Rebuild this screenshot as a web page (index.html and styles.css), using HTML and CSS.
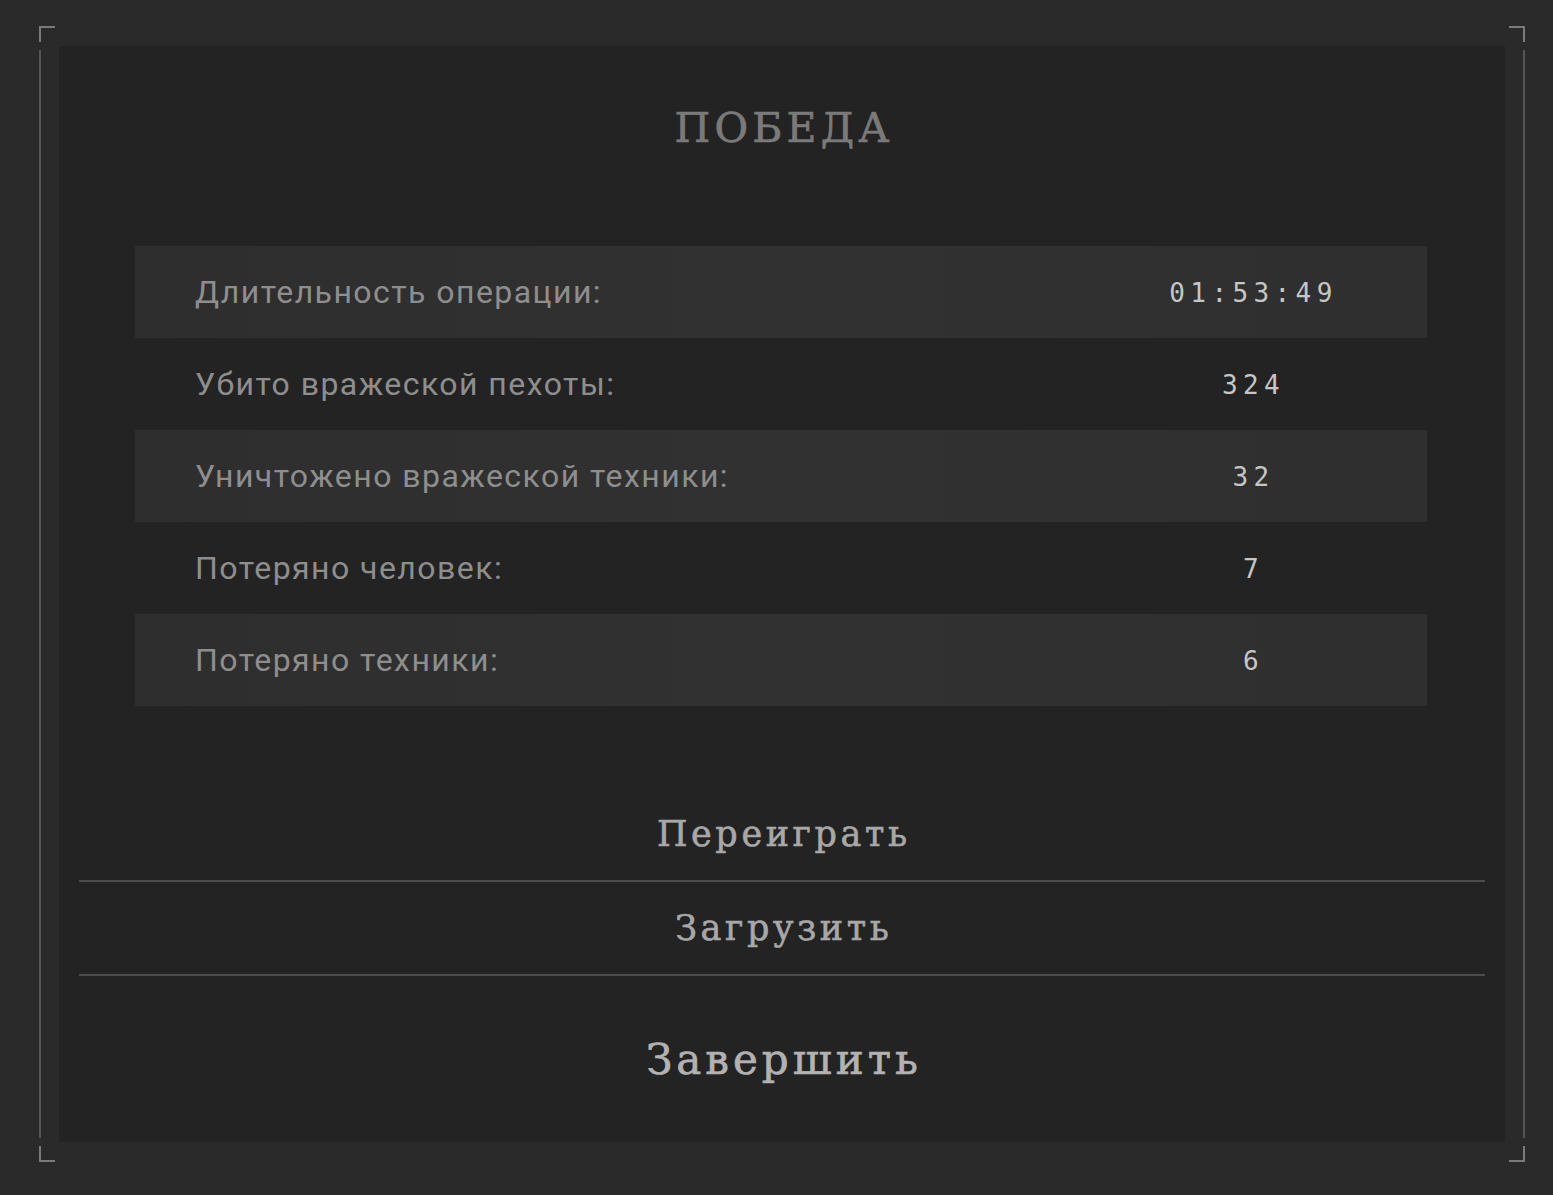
FILE: index.html
```html
<!DOCTYPE html>
<html lang="ru">
<head>
<meta charset="utf-8">
<title>Победа</title>
<link rel="stylesheet" href="styles.css">
</head>
<body>
<div class="screen">
  <div class="frame">
    <span class="corner corner-tl"></span>
    <span class="corner corner-tr"></span>
    <span class="corner corner-bl"></span>
    <span class="corner corner-br"></span>
    <span class="rail rail-left"></span>
    <span class="rail rail-right"></span>
    <main class="panel">
      <h1 class="title">ПОБЕДА</h1>
      <div class="stats">
        <div class="row row-shaded"><span class="label">Длительность операции:</span><span class="value">01:53:49</span></div>
        <div class="row"><span class="label">Убито вражеской пехоты:</span><span class="value">324</span></div>
        <div class="row row-shaded"><span class="label">Уничтожено вражеской техники:</span><span class="value">32</span></div>
        <div class="row"><span class="label">Потеряно человек:</span><span class="value">7</span></div>
        <div class="row row-shaded"><span class="label">Потеряно техники:</span><span class="value">6</span></div>
      </div>
      <nav class="menu">
        <button class="menu-item">Переиграть</button>
        <button class="menu-item">Загрузить</button>
        <button class="menu-item menu-item-final">Завершить</button>
      </nav>
    </main>
  </div>
</div>
</body>
</html>
```

FILE: styles.css
```css
html, body {
  margin: 0;
  padding: 0;
}

body {
  width: 1553px;
  height: 1195px;
  overflow: hidden;
  background: #2a2a2a;
  font-family: "Roboto", "Noto Sans", sans-serif;
}

.screen {
  padding: 26px 0 0 39px;
}

.frame {
  position: relative;
  width: 1486px;
  height: 1136px;
  padding: 20px;
  box-sizing: border-box;
}

.corner {
  position: absolute;
  width: 16px;
  height: 16px;
  box-sizing: border-box;
  border: 0 solid #7a7a7a;
}

.corner-tl { top: 0; left: 0; border-top-width: 2px; border-left-width: 2px; }
.corner-tr { top: 0; right: 0; border-top-width: 2px; border-right-width: 2px; }
.corner-bl { bottom: 0; left: 0; border-bottom-width: 2px; border-left-width: 2px; }
.corner-br { bottom: 0; right: 0; border-bottom-width: 2px; border-right-width: 2px; }

.rail {
  position: absolute;
  top: 24px;
  bottom: 24px;
  width: 2px;
  background: #555555;
}

.rail-left { left: 0; }
.rail-right { right: 0; }

.panel {
  height: 100%;
  box-sizing: border-box;
  background: #232323;
  display: flex;
  flex-direction: column;
  padding-top: 57px;
}

.title {
  margin: 0 0 93px;
  font-family: "DejaVu Serif", serif;
  font-weight: normal;
  font-size: 41px;
  line-height: 50px;
  letter-spacing: 4.2px;
  padding-left: 4px;
  text-align: center;
  color: #7a7a7a;
  -webkit-text-stroke: 0.7px #7a7a7a;
}

.stats {
  margin: 0 78px 0 76px;
  display: flex;
  flex-direction: column;
}

.row {
  height: 92px;
  display: flex;
  align-items: center;
  padding: 0 60px;
}

.row-shaded {
  background: linear-gradient(90deg, #2e2e2e 0%, #313131 50%, #2f2f2f 100%);
}

.label {
  font-family: "Roboto", "Noto Sans", sans-serif;
  font-size: 32px;
  letter-spacing: 1.45px;
  color: #8e8e8e;
}

.value {
  margin-left: auto;
  width: 232px;
  box-sizing: border-box;
  padding-left: 5px;
  padding-top: 2px;
  text-align: center;
  font-family: "DejaVu Sans Mono", monospace;
  font-size: 26px;
  letter-spacing: 5.4px;
  color: #c6c6c6;
}

.menu {
  flex: 1;
  margin: 82px 20px 0;
  display: flex;
  flex-direction: column;
}

.menu-item {
  box-sizing: border-box;
  height: 94px;
  flex: none;
  margin: 0;
  padding: 0 0 0 3.6px;
  background: none;
  border: 0;
  border-bottom: 2px solid #4c4c4c;
  font-family: "DejaVu Serif", serif;
  font-size: 35px;
  letter-spacing: 3.6px;
  color: #a8a8a8;
  -webkit-text-stroke: 0.6px #a8a8a8;
  text-align: center;
}

.menu-item-final {
  flex: 1;
  border-bottom: 0;
  font-size: 42px;
  letter-spacing: 4px;
  padding-left: 4px;
  color: #b2b2b2;
  -webkit-text-stroke: 0.7px #b2b2b2;
}
```
